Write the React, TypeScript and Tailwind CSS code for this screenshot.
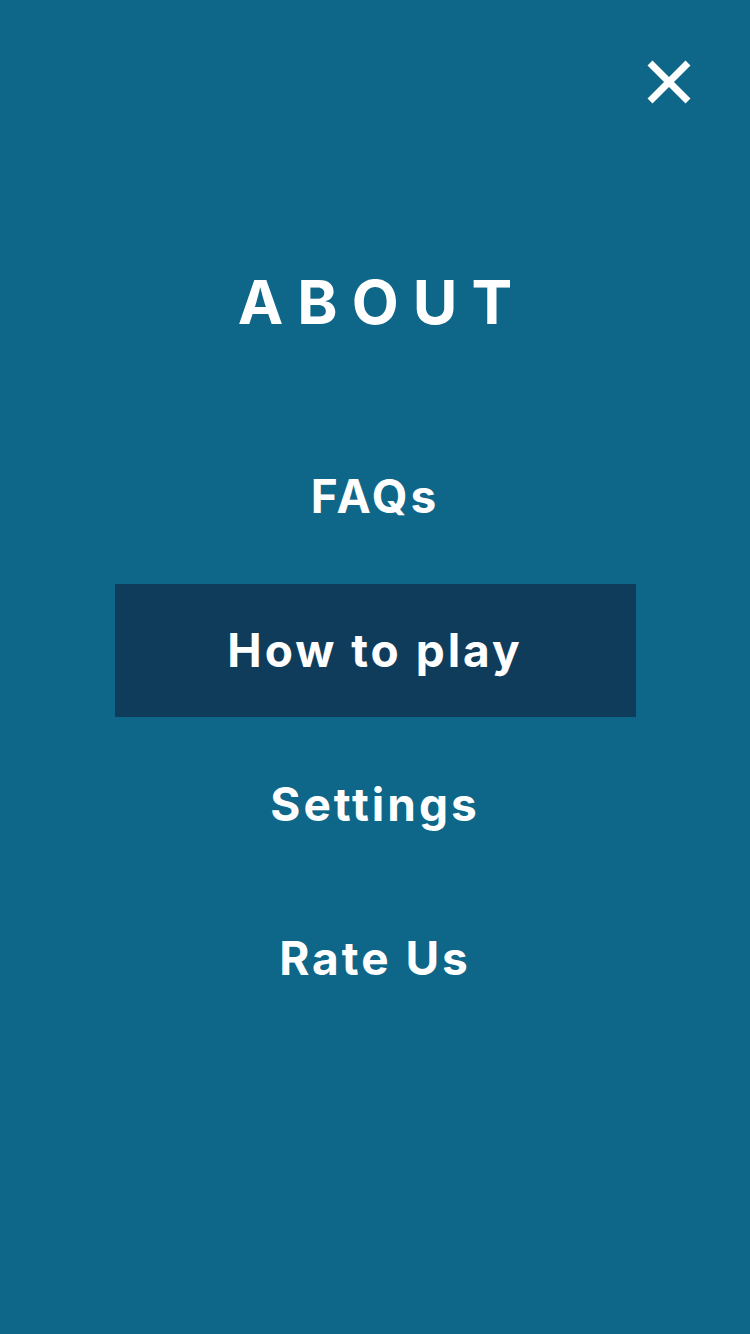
const items = ["FAQs", "How to play", "Settings", "Rate Us"];

export default function App() {
  const active = "How to play";

  return (
    <div
      className="w-[750px] h-[1334px] bg-[#0e6688] text-white flex flex-col items-center"
      style={{ fontFamily: "Inter, Lato, sans-serif", fontVariantLigatures: "none" }}
    >
      <div className="w-full flex justify-end pt-[60px] pr-[59px]">
        <button className="w-[44px] h-[44px]">
          <svg viewBox="0 0 44 44" className="w-[44px] h-[44px]">
            <path d="M3 3 L41 41 M41 3 L3 41" stroke="#fff" strokeWidth="7" />
          </svg>
        </button>
      </div>

      <h1 className="mt-[168px] text-[61px] font-bold leading-none tracking-[0.23em] pl-[0.23em]">
        ABOUT
      </h1>

      <ul className="mt-[97px] flex flex-col gap-[21px]">
        {items.map((item) => (
          <li
            key={item}
            className={`w-[521px] h-[133px] flex items-center justify-center text-[46px] font-bold tracking-[0.065em] ${
              item === active ? "bg-[#0f3c5b]" : ""
            }`}
          >
            {item}
          </li>
        ))}
      </ul>
    </div>
  );
}
